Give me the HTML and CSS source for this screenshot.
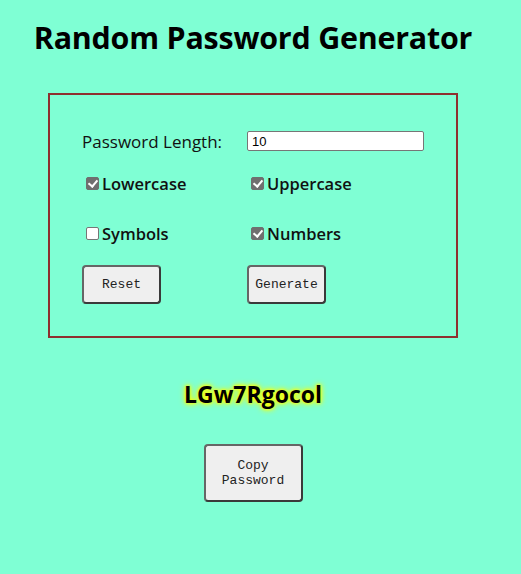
FILE: index.html
```html
<!DOCTYPE html>
<html>
<head>
<meta charset="utf-8">
<link rel="stylesheet" href="styles.css">
</head>
<body>
<div class="page">
  <h1 class="title">Random Password Generator</h1>
  <div class="panel">
    <div class="grid">
      <label class="len-label" for="len">Password Length:</label>
      <input class="len-input" id="len" type="text" value="10">
      <label class="opt"><span class="box checked"></span>Lowercase</label>
      <label class="opt"><span class="box checked"></span>Uppercase</label>
      <label class="opt"><span class="box"></span>Symbols</label>
      <label class="opt"><span class="box checked"></span>Numbers</label>
      <div class="cell"><button class="btn small">Reset</button></div>
      <div class="cell"><button class="btn small">Generate</button></div>
    </div>
  </div>
  <div class="result"><span class="pw">LGw7Rgocol</span></div>
  <div class="copy-row"><button class="btn copy">Copy<br>Password</button></div>
</div>
</body>
</html>
```
FILE: styles.css
```css
html, body {
  margin: 0;
  padding: 0;
  background: #7fffd4;
}
body {
  font-family: "Open Sans", "Noto Sans", sans-serif;
  color: #000;
}
.page {
  width: 490px;
  margin-left: 8px;
  display: flex;
  flex-direction: column;
  align-items: center;
}
.title {
  margin: 18px 0 0;
  font-size: 30.4px;
  font-weight: 700;
  line-height: 40px;
  letter-spacing: -0.2px;
}
.panel {
  margin-top: 35px;
  width: 406px;
  height: 241px;
  border: 2px solid #8e2f2f;
  box-sizing: content-box;
  padding: 0;
}
.grid {
  display: grid;
  grid-template-columns: 165px 177px;
  grid-template-rows: 32px 53px 47px 47px;
  margin: 30px 0 0 32px;
  align-items: center;
}
.len-label {
  font-size: 17px;
  color: #111;
}
.len-input {
  width: 177px;
  height: 20px;
  box-sizing: border-box;
  border: 1px solid #767676;
  border-radius: 2px;
  padding: 1px 4px;
  font-family: "Liberation Sans", Arial, sans-serif;
  font-size: 13px;
  background: #fff;
}
.opt {
  display: flex;
  align-items: center;
  font-size: 16.5px;
  font-weight: 600;
  color: #111;
  padding-left: 4px;
}
.box {
  width: 13px;
  height: 13px;
  box-sizing: border-box;
  border: 1px solid #767676;
  border-radius: 2px;
  background: #fff;
  margin-right: 3px;
  position: relative;
}
.box.checked {
  background: #6f6f6f;
  border-color: #6f6f6f;
}
.box.checked::after {
  content: "";
  position: absolute;
  left: 3px;
  top: 0px;
  width: 4px;
  height: 7px;
  border: solid #fff;
  border-width: 0 2px 2px 0;
  transform: rotate(40deg);
}
.cell {
  align-self: end;
}
.btn {
  font-family: "Liberation Mono", "Courier New", monospace;
  font-size: 13px;
  color: #222;
  background: #efefef;
  border: 2px solid #3a3a3a;
  border-top-color: #666;
  border-left-color: #666;
  border-radius: 4px;
  padding: 0;
  box-sizing: border-box;
}
.btn.small {
  width: 79px;
  height: 39px;
}
.result {
  margin-top: 40px;
}
.pw {
  font-size: 23px;
  font-weight: 700;
  text-shadow: 0 0 3px #ffff00, 0 0 5px #ffff00, 0 0 7px #f5ff00;
}
.copy-row {
  margin-top: 34px;
}
.btn.copy {
  width: 99px;
  height: 58px;
  line-height: 15px;
}
```
